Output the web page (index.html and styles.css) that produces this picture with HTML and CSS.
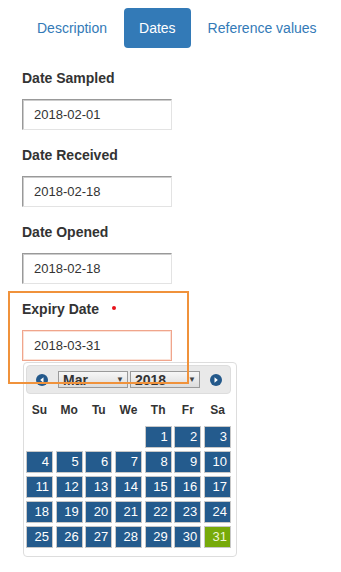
FILE: index.html
```html
<!DOCTYPE html>
<html lang="en">
<head>
    <meta charset="UTF-8">
    <meta name="viewport" content="width=device-width, initial-scale=1.0">
    <title>Sample Dates</title>
    <link rel="stylesheet" href="styles.css">
</head>
<body>
    <ul class="nav-pills">
        <li><a href="#">Description</a></li>
        <li class="active"><a href="#">Dates</a></li>
        <li><a href="#">Reference values</a></li>
    </ul>
    <div class="form">
        <div class="field">
            <label>Date Sampled</label>
            <input type="text" value="2018-02-01">
        </div>
        <div class="field">
            <label>Date Received</label>
            <input type="text" value="2018-02-18">
        </div>
        <div class="field">
            <label>Date Opened</label>
            <input type="text" value="2018-02-18">
        </div>
        <div class="field">
            <label>Expiry Date <span class="required"></span></label>
            <input type="text" class="focused" value="2018-03-31">
        </div>
        <div class="datepicker">
            <div class="dp-header">
                <span class="dp-nav">
                    <svg width="12" height="12" viewBox="0 0 12 12"><circle cx="6" cy="6" r="6" fill="#24598b"/><path d="M7.5 3.2 L4.2 6 L7.5 8.8 Z" fill="#fff"/></svg>
                </span>
                <div class="dp-selects">
                    <span class="dp-select">Mar<i>&#9660;</i></span>
                    <span class="dp-select">2018<i>&#9660;</i></span>
                </div>
                <span class="dp-nav">
                    <svg width="12" height="12" viewBox="0 0 12 12"><circle cx="6" cy="6" r="6" fill="#24598b"/><path d="M4.5 3.2 L7.8 6 L4.5 8.8 Z" fill="#fff"/></svg>
                </span>
            </div>
            <div class="dp-days">
                <span>Su</span><span>Mo</span><span>Tu</span><span>We</span><span>Th</span><span>Fr</span><span>Sa</span>
            </div>
            <div class="dp-grid">
                <span class="empty"></span><span class="empty"></span><span class="empty"></span><span class="empty"></span>
                <a>1</a><a>2</a><a>3</a>
                <a>4</a><a>5</a><a>6</a><a>7</a><a>8</a><a>9</a><a>10</a>
                <a>11</a><a>12</a><a>13</a><a>14</a><a>15</a><a>16</a><a>17</a>
                <a>18</a><a>19</a><a>20</a><a>21</a><a>22</a><a>23</a><a>24</a>
                <a>25</a><a>26</a><a>27</a><a>28</a><a>29</a><a>30</a><a class="selected">31</a>
            </div>
        </div>
    </div>
    <div class="highlight"></div>
</body>
</html>
```

FILE: styles.css
```css
body {
    margin: 0;
    font-family: 'Liberation Sans', Arial, sans-serif;
    font-size: 14px;
    color: #333;
    background: #fff;
}
.nav-pills {
    list-style: none;
    margin: 0;
    padding: 8px 0 0 22px;
    display: flex;
    gap: 2px;
}
.nav-pills a {
    display: block;
    padding: 10px 15px;
    line-height: 20px;
    color: #337ab7;
    text-decoration: none;
    border-radius: 4px;
}
.nav-pills .active a {
    background: #337ab7;
    color: #fff;
}
.form {
    padding: 20px 0 0 22px;
}
.field {
    margin-bottom: 15px;
}
.field label {
    display: block;
    font-weight: bold;
    line-height: 20px;
    margin-bottom: 11px;
}
.required {
    display: inline-block;
    width: 4px;
    height: 4px;
    border-radius: 50%;
    background: #e8121b;
    margin-left: 9px;
    vertical-align: 4px;
}
.field input {
    box-sizing: border-box;
    width: 150px;
    height: 31px;
    padding: 0 11px;
    font-family: 'Liberation Sans', Arial, sans-serif;
    font-size: 13px;
    color: #333;
    border: 1px solid;
    border-color: #999 #e3e3e3 #e3e3e3 #999;
    box-shadow: inset 1px 1px 0 #ccc;
    outline: none;
}
.field input.focused {
    border-color: #f0a58c;
    box-shadow: inset 0 0 0 1px #fbe2d8;
}
.datepicker {
    box-sizing: border-box;
    width: 214px;
    margin: -14px 0 0 1px;
    padding: 2px 5px 8px 2px;
    border: 1px solid #ddd;
    border-radius: 4px;
    background: #fff;
}
.dp-header {
    display: flex;
    align-items: center;
    height: 27px;
    padding: 0 8px 0 9px;
    background: #e9e9e9;
    border: 1px solid #ddd;
    border-radius: 4px;
}
.dp-nav {
    display: flex;
    width: 12px;
    height: 12px;
}
.dp-selects {
    display: flex;
    gap: 2px;
    margin: 0 auto 0 10px;
}
.dp-select {
    box-sizing: border-box;
    display: flex;
    align-items: center;
    justify-content: space-between;
    width: 70px;
    height: 17px;
    padding: 0 3px 0 4px;
    border: 1px solid #9a9a9a;
    background: linear-gradient(#f7f7f7, #dcdcdc);
    font-size: 14px;
    font-weight: bold;
    color: #333;
}
.dp-select i {
    font-style: normal;
    font-size: 8px;
    color: #444;
}
.dp-days {
    display: grid;
    grid-template-columns: repeat(7, 1fr);
    column-gap: 2.7px;
    height: 32px;
    align-items: center;
}
.dp-days span {
    text-align: center;
    font-size: 12px;
    font-weight: bold;
    color: #333;
}
.dp-grid {
    display: grid;
    grid-template-columns: repeat(7, 1fr);
    column-gap: 2.7px;
    row-gap: 3px;
}
.dp-grid a {
    box-sizing: border-box;
    height: 22px;
    padding-right: 3px;
    text-align: right;
    line-height: 20px;
    font-size: 13px;
    color: #fff;
    background: #245b8d;
    border: 1px solid #c8c8c8;
}
.dp-grid a.selected {
    background: #77aa0a;
    color: #eef5d8;
}
.highlight {
    position: absolute;
    left: 8px;
    top: 291px;
    width: 177px;
    height: 89px;
    border: 2px solid #f0923b;
}
```
